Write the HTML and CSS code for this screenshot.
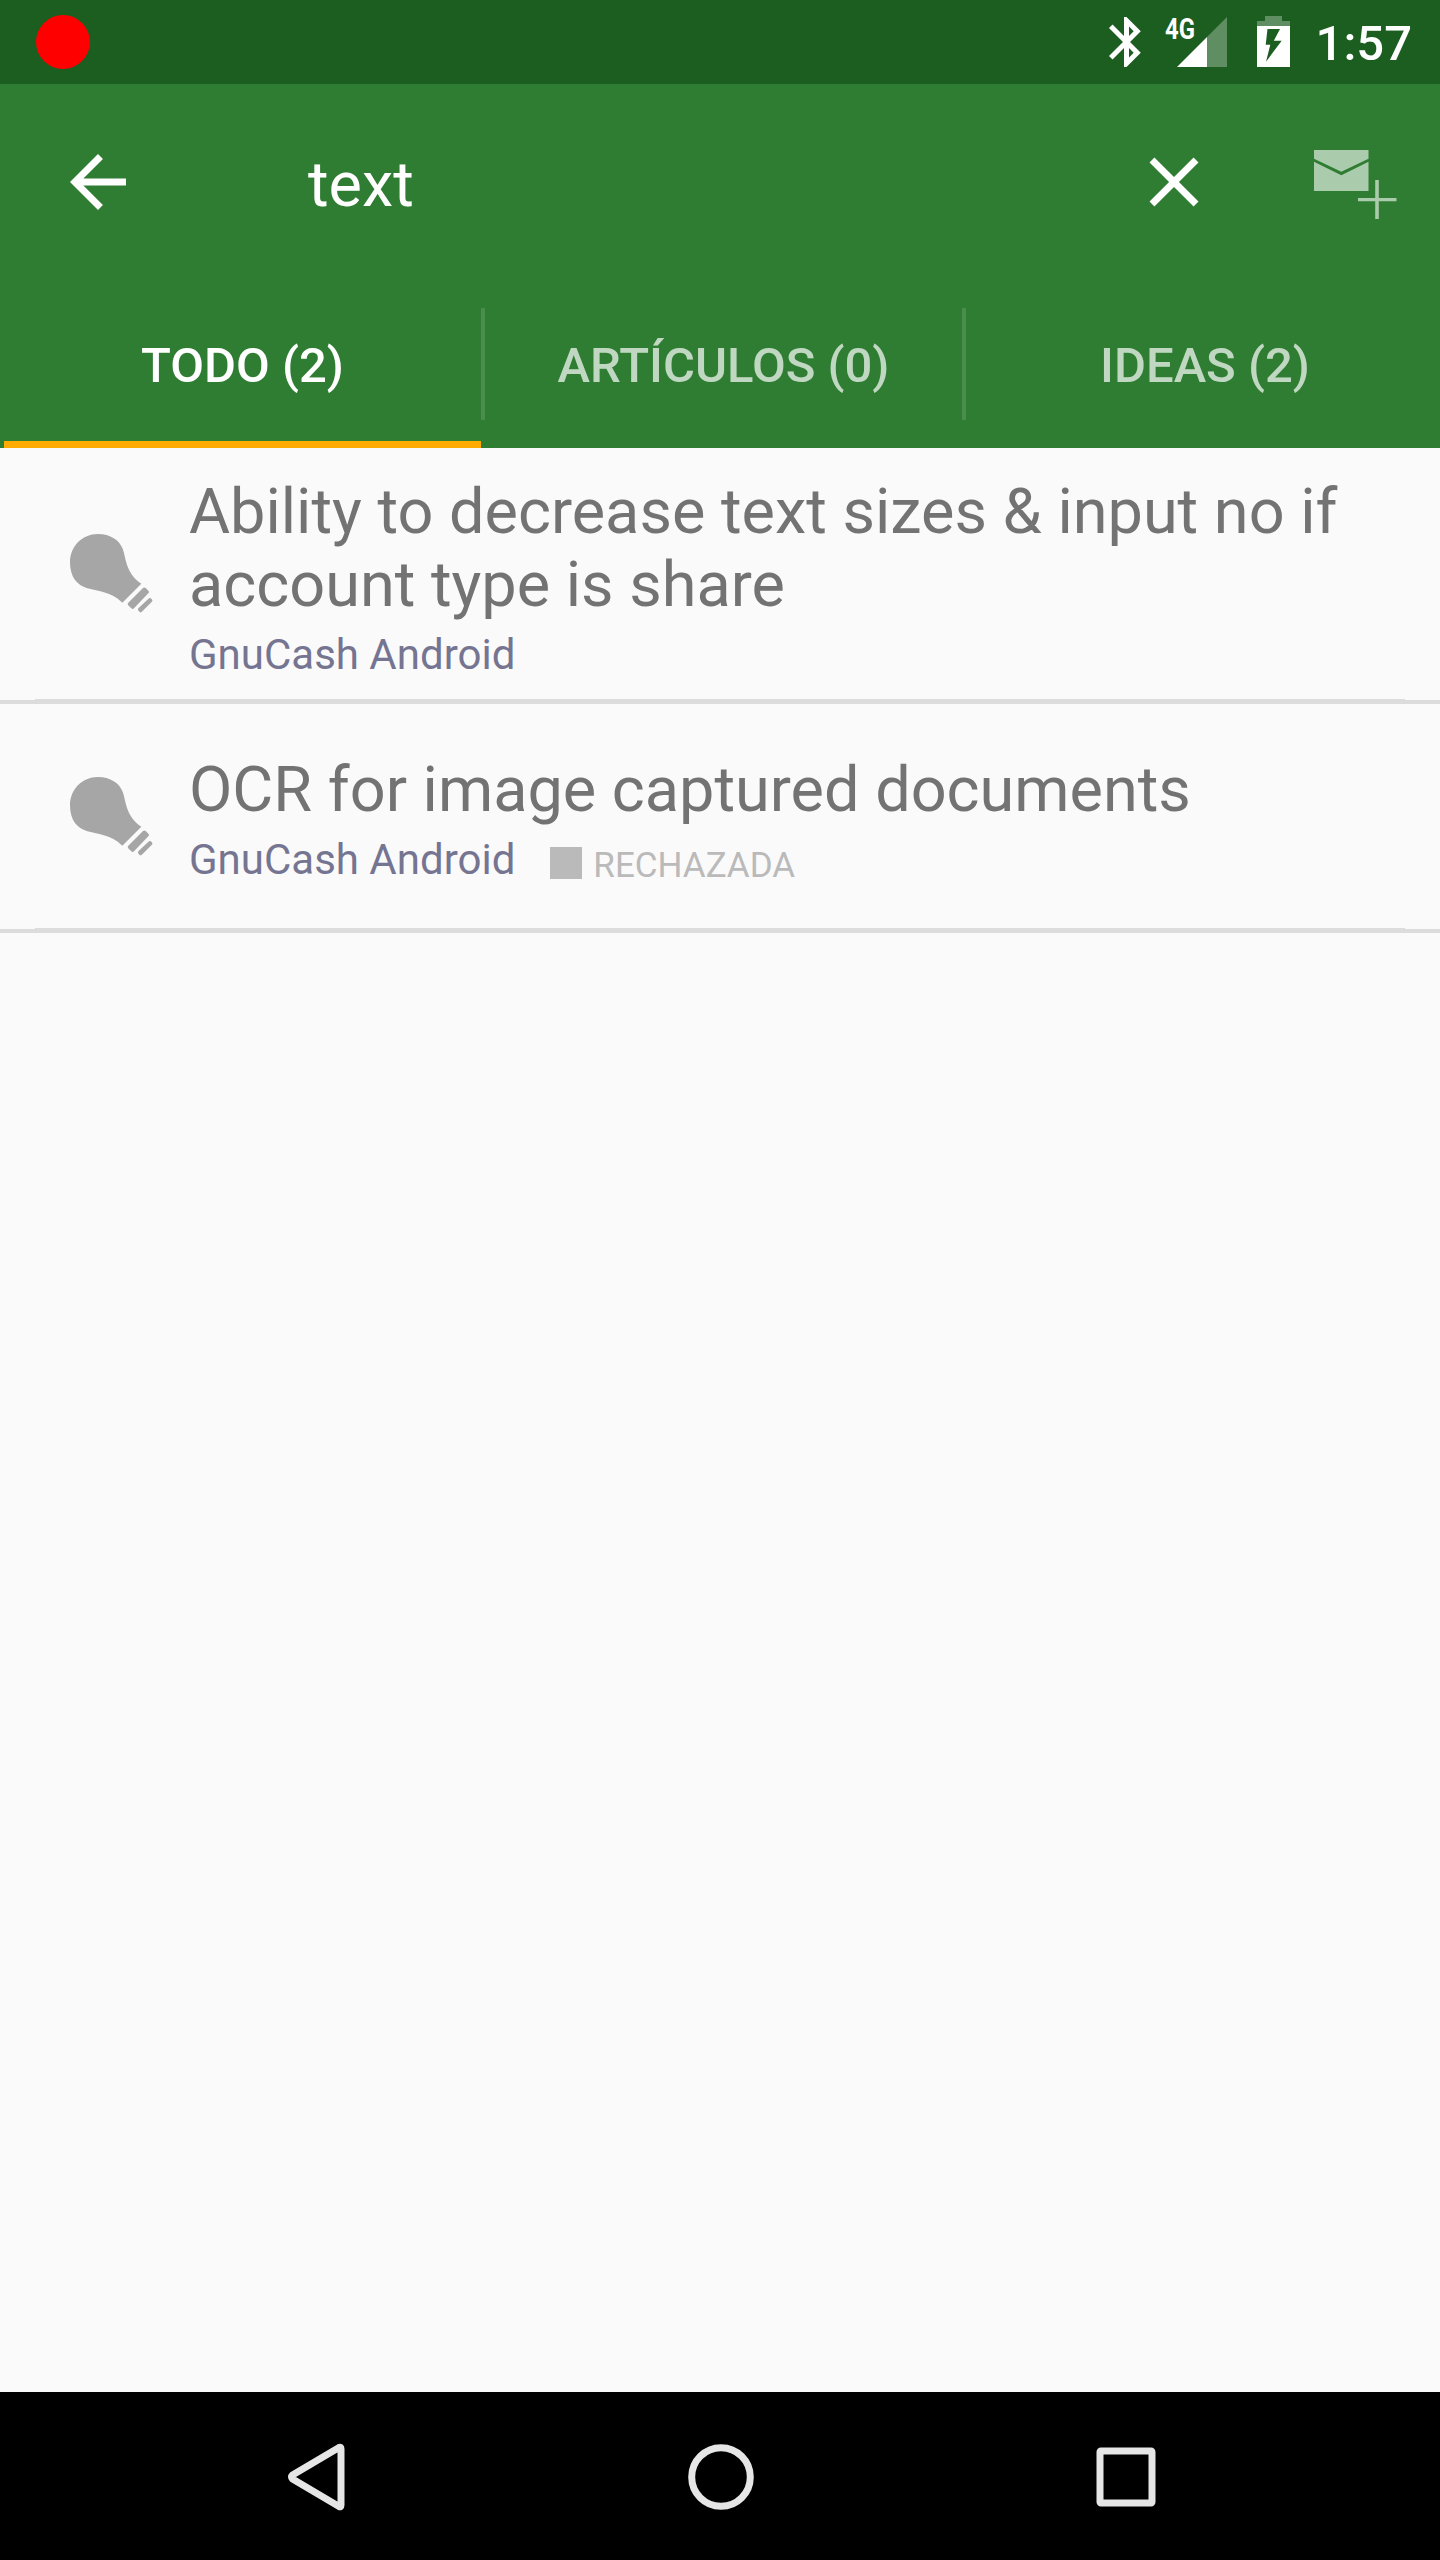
FILE: index.html
```html
<!DOCTYPE html>
<html lang="es">
<head>
<meta charset="utf-8">
<title>Buscar</title>
<link rel="stylesheet" href="styles.css">
</head>
<body>
<div class="screen">
  <div class="status-bar">
    <span class="record-dot"></span>
    <div class="status-icons">
      <svg class="bluetooth" viewBox="5 2 12.8 20"><path d="M17.71 7.71L12 2h-1v7.59L6.41 5 5 6.41 10.59 12 5 17.59 6.41 19 11 14.41V22h1l5.71-5.71-4.3-4.29 4.3-4.29zM13 5.83l1.88 1.88L13 9.59V5.83zm1.88 10.46L13 18.17v-3.76l1.88 1.88z"/></svg>
      <svg class="signal" viewBox="0 0 62 50">
        <path d="M42 20V50H62V0z" fill-opacity=".3"/>
        <path d="M12 50L42 20V50z"/>
        <text class="network" x="0" y="22.300" textLength="30" lengthAdjust="spacingAndGlyphs">4G</text>
      </svg>
      <svg class="battery" viewBox="0 0 33 51">
        <path d="M8 0H25V5H33V10H0V5H8z" fill-opacity=".3"/>
        <path fill-rule="evenodd" d="M0 10H33V51H0zM10.500 13L8.700 28.700H13.300L9 45.700L24.700 24.700H16.800L23 13z"/>
      </svg>
      <span class="clock">1:57</span>
    </div>
  </div>
  <header class="toolbar">
    <svg class="icon back" viewBox="0 0 24 24"><path d="M20 11H7.830l5.590-5.590L12 4l-8 8 8 8 1.410-1.410L7.830 13H20z"/></svg>
    <span class="query">text</span>
    <svg class="icon clear" viewBox="0 0 24 24"><path d="M19 6.410L17.590 5 12 10.590 6.410 5 5 6.410 10.590 12 5 17.590 6.410 19 12 13.410 17.590 19 19 17.590 13.410 12z"/></svg>
    <svg class="mail-add" viewBox="0 0 84 84">
      <path d="M2 10H56.500V18.700L29.300 31.800L2 18.700z"/>
      <path d="M2 21.800L29.300 35.200L56.500 21.800V51H2z"/>
      <path d="M63.200 40H66.800V58H84.500V61.300H66.800V79H63.200V61.300H46V58H63.200z"/>
    </svg>
  </header>
  <nav class="tabs">
    <div class="tab active">TODO (2)</div>
    <div class="tab">ARTÍCULOS (0)</div>
    <div class="tab">IDEAS (2)</div>
  </nav>
  <main class="results">
    <article class="result">
      <svg class="bulb" viewBox="60 72 249 237"><path d="M60 157C60 108 98 72 143 72C182 72 208 91 218 116C228 141 226 189 274 221L217 278C181 244 147 245 112 235C81 226 60 201 60 157z"/><path d="M234 279L279 234Q283 231 287 234L295 242Q299 246 295 250L252 295Q248 299 244 295L236 287Q232 283 234 279zM265 295L297 265Q301 262 304 266Q310 271 305 276L277 304Q273 309 269 306Q262 301 265 295z"/></svg>
      <div class="body">
        <h2 class="title">Ability to decrease text sizes &amp; input no if account type is share</h2>
        <div class="meta"><span class="forum">GnuCash Android</span></div>
      </div>
    </article>
    <article class="result short">
      <svg class="bulb" viewBox="60 72 249 237"><path d="M60 157C60 108 98 72 143 72C182 72 208 91 218 116C228 141 226 189 274 221L217 278C181 244 147 245 112 235C81 226 60 201 60 157z"/><path d="M234 279L279 234Q283 231 287 234L295 242Q299 246 295 250L252 295Q248 299 244 295L236 287Q232 283 234 279zM265 295L297 265Q301 262 304 266Q310 271 305 276L277 304Q273 309 269 306Q262 301 265 295z"/></svg>
      <div class="body">
        <h2 class="title">OCR for image captured documents</h2>
        <div class="meta"><span class="forum">GnuCash Android</span><span class="swatch"></span><span class="state">RECHAZADA</span></div>
      </div>
    </article>
  </main>
  <footer class="nav-bar">
    <svg class="nav-icon" viewBox="0 0 80 80"><path d="M10.500 38Q8.500 40 10.500 42L57 69.500Q59 70.500 59 68V12Q59 9.500 57 10.500z"/></svg>
    <svg class="nav-icon" viewBox="0 0 80 80"><circle cx="40" cy="40" r="29.300"/></svg>
    <svg class="nav-icon" viewBox="0 0 80 80"><rect x="14" y="14" width="52" height="52" rx="1"/></svg>
  </footer>
</div>
</body>
</html>
```
FILE: styles.css
```css
* { box-sizing: border-box; }
body { margin: 0; font-family: Roboto, sans-serif; }
svg { display: block; flex: none; }

.screen {
  width: 1440px;
  height: 2560px;
  display: flex;
  flex-direction: column;
  background: #fafafa;
}

.status-bar {
  height: 84px;
  padding: 0 28px 0 36px;
  display: flex;
  align-items: center;
  justify-content: space-between;
  background: #1b5e20;
  color: #fff;
}
.record-dot { width: 54px; height: 54px; border-radius: 50%; background: #f00; }
.status-icons { display: flex; align-items: center; fill: #fff; }
.bluetooth { width: 32px; height: 50px; margin-right: 24px; }
.signal { width: 62px; height: 50px; margin-right: 30px; overflow: visible; }
.network { font-size: 30px; font-weight: 700; }
.battery { width: 33px; height: 51px; margin-right: 26px; margin-bottom: 1px; }
.clock { font-size: 49px; font-weight: 500; line-height: 58px; padding-top: 4px; }

.toolbar {
  height: 196px;
  padding: 0 44px 0 56px;
  display: flex;
  align-items: center;
  background: #2e7d32;
  fill: #fff;
}
.icon { width: 84px; height: 84px; }
.query { flex: 1; padding: 5px 0 0 168px; font-size: 63px; line-height: 76px; color: #fff; }
.mail-add { width: 84px; height: 84px; margin-left: 96px; overflow: visible; fill-opacity: .6; }

.tabs {
  height: 168px;
  display: grid;
  grid-template-columns: 485px 481px 474px;
  background: #2e7d32;
  color: rgba(255, 255, 255, .7);
}
.tab {
  display: flex;
  align-items: center;
  justify-content: center;
  padding: 3px 4px 0 0;
  background: linear-gradient(rgba(255,255,255,.13), rgba(255,255,255,.13)) right 28px / 4px 112px no-repeat;
  font-size: 49px;
  font-weight: 500;
}
.tab:last-child { padding: 3px 0 0 4px; background: none; }
.tab.active {
  padding-right: 0;
  color: #fff;
  background:
    linear-gradient(#ffab00, #ffab00) 4px 161px / 477px 7px no-repeat,
    linear-gradient(rgba(255,255,255,.13), rgba(255,255,255,.13)) right 28px / 4px 112px no-repeat;
}

.results { flex: 1; }
.result {
  height: 256px;
  padding: 27px 70px 0;
  display: flex;
  background:
    linear-gradient(#dcdcdc, #dcdcdc) center bottom / 100% 4px no-repeat,
    linear-gradient(#dcdcdc, #dcdcdc) center bottom / 1370px 5px no-repeat;
}
.result.short { height: 229px; padding-top: 49px; }
.bulb { width: 83px; height: 79px; margin: 59px 36px 0 0; fill: #a6a6a6; }
.short .bulb { margin-top: 24px; }
.title { margin: 0; font-size: 63px; font-weight: 400; line-height: 73px; color: #737373; }
.body { width: 1180px; }
.meta { display: flex; margin-top: 9px; font-size: 42px; line-height: 50px; color: #757592; }
.swatch { width: 32px; height: 32px; margin: 12px 11px 0 35px; background: #bababa; }
.state { padding-top: 6px; font-size: 35px; color: #bababa; }

.nav-bar {
  height: 168px;
  padding: 1px 0 0 1px;
  display: flex;
  justify-content: center;
  gap: 325px;
  align-items: center;
  background: #000;
}
.nav-icon { width: 80px; height: 80px; fill: none; stroke: #e6e6e6; stroke-width: 7; }
.nav-icon:first-child { margin: 0 -6px 0 6px; }
```
